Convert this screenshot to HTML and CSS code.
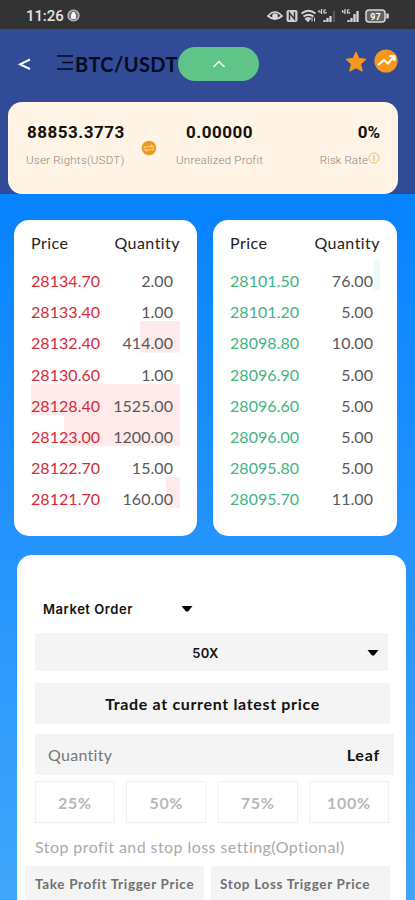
FILE: index.html
```html
<!DOCTYPE html>
<html lang="en">
<head>
<meta charset="utf-8">
<title>BTC/USDT</title>
<link rel="stylesheet" href="styles.css">
</head>
<body>
<div class="status">
  <span class="time">11:26</span>
  <svg class="lock" width="13" height="13" viewBox="0 0 13 13"><circle cx="6.5" cy="6.5" r="5.5" fill="#77787a" stroke="#c9c9c9" stroke-width="1.2"/><path d="M4.500 6h4v3.500h-4zM5 6V4.800a1.500 1.500 0 0 1 3 0V6" fill="#fff" stroke="#fff" stroke-width=".8"/></svg>
  <svg class="sys" width="124" height="16" viewBox="0 0 124 16" fill="none" stroke="#d8d8d8">
    <path d="M1 8Q8 0 15 8Q8 14 1 8Z" stroke-width="1.7"/><circle cx="8" cy="8" r="2.8" fill="#d8d8d8" stroke="none"/>
    <rect x="19.500" y="2" width="11" height="12" rx="2" fill="#d0d0d0" stroke="none"/><path d="M22.500 12V5l5 6V4" stroke="#333" stroke-width="1.4"/>
    <path d="M34.500 5.500Q41.500 0 48.500 5.500M36.500 8.500Q41.500 5 46.500 8.500M39 11Q41 9 43 10.500L41 13Z" stroke-width="1.8"/><path d="M45 9.500v4M47.500 9.500v4"/>
    <path d="M52 2v2h2M54.500 1v5M59 2h-2v3h2V4M75.500 2v2h2M78 1v5M82.500 2h-2v3h2V4" stroke-width="1.200"/>
    <path d="M57.500 14v-2M60.500 14v-4M63.500 14V8M81.500 14v-2M84.500 14v-4M87.500 14V6M90.500 14V3" stroke-width="2.300"/><path d="M67 14V3" stroke="#5a5a5a" stroke-width="2"/>
    <rect x="99" y="2" width="19" height="12" rx="3" fill="#626262" stroke-width="1.5"/><path d="M120.500 5.500v5" stroke-width="2.500"/>
    <text x="108.500" y="11.500" class="battery">97</text>
  </svg>
</div>
<header class="header">
  <div class="nav">
    <svg class="back" width="13" height="13" viewBox="0 0 13 13"><path d="M12 1.500 2 6.300l10 4.700" fill="none" stroke="#fff" stroke-width="2"/></svg>
    <svg class="menu" width="18" height="17" viewBox="0 0 18 17"><path d="M1 2h16M6 8.500h11M1 15h16" stroke="#06091c" stroke-width="1.300"/></svg>
    <span class="pair">BTC/USDT</span>
    <span class="pill"><svg width="14" height="8" viewBox="0 0 14 8"><path d="M1.500 7 7 1.500 12.500 7" fill="none" stroke="#effaf1" stroke-width="1.500"/></svg></span>
    <svg class="star" width="22" height="22" viewBox="0 0 22 22"><path d="m11 1 2.900 6.500 7.100.7-5.300 4.800 1.500 7.200L11 16.700 4.800 20.200 6.300 13 1 8.200l7.100-.7Z" fill="#f7981d" stroke="#f7981d" stroke-linejoin="round"/></svg>
    <svg class="trend" width="24" height="24" viewBox="0 0 24 24"><circle cx="12" cy="12" r="11.600" fill="#f7981d"/><path d="m4 16 6-5 4 3.500 6-7M15.500 7H20.500v5" fill="none" stroke="#fff" stroke-width="2"/></svg>
  </div>
  <section class="summary">
    <div class="stat rights"><b>88853.3773</b><span>User Rights(USDT)</span></div>
    <svg class="swap" width="16" height="16" viewBox="0 0 16 16"><circle cx="8" cy="8" r="7.300" fill="#ed9a1d"/><path d="M3 8.500V7l7-1V4.500L13 7H6M13 8v1.500l-7 .8v1.500L3 9.500h7" fill="#fbd78f" stroke="#fbd78f" stroke-width=".5"/></svg>
    <div class="stat profit"><b>0.00000</b><span>Unrealized Profit</span></div>
    <div class="stat risk"><b>0%</b><span>Risk Rate<svg width="12" height="12" viewBox="0 0 12 12"><circle cx="6" cy="6" r="5" fill="none" stroke="#e8c379"/><path d="M6 3v6" stroke="#e8c379" stroke-width="1.300"/></svg></span></div>
  </section>
</header>
<main>
  <div class="books">
    <section class="book sell">
      <div class="row head"><span>Price</span><span>Quantity</span></div>
      <div class="row" style="--d:0px"><i>28134.70</i><em>2.00</em></div>
      <div class="row" style="--d:0px"><i>28133.40</i><em>1.00</em></div>
      <div class="row" style="--d:40px"><i>28132.40</i><em>414.00</em></div>
      <div class="row" style="--d:0px"><i>28130.60</i><em>1.00</em></div>
      <div class="row" style="--d:149px"><i>28128.40</i><em>1525.00</em></div>
      <div class="row" style="--d:116px"><i>28123.00</i><em>1200.00</em></div>
      <div class="row" style="--d:0px"><i>28122.70</i><em>15.00</em></div>
      <div class="row" style="--d:14px"><i>28121.70</i><em>160.00</em></div>
    </section>
    <section class="book buy">
      <div class="row head"><span>Price</span><span>Quantity</span></div>
      <div class="row" style="--d:6px"><i>28101.50</i><em>76.00</em></div>
      <div class="row" style="--d:0px"><i>28101.20</i><em>5.00</em></div>
      <div class="row" style="--d:0px"><i>28098.80</i><em>10.00</em></div>
      <div class="row" style="--d:0px"><i>28096.90</i><em>5.00</em></div>
      <div class="row" style="--d:0px"><i>28096.60</i><em>5.00</em></div>
      <div class="row" style="--d:0px"><i>28096.00</i><em>5.00</em></div>
      <div class="row" style="--d:0px"><i>28095.80</i><em>5.00</em></div>
      <div class="row" style="--d:0px"><i>28095.70</i><em>11.00</em></div>
    </section>
  </div>
  <section class="order">
    <div class="type"><span>Market Order</span><svg width="12" height="6" viewBox="0 0 12 6"><path d="M.5 0h11L7 5.500H5Z"/></svg></div>
    <div class="field leverage"><span>50X</span><svg width="12" height="6" viewBox="0 0 12 6"><path d="M.5 0h11L7 5.500H5Z"/></svg></div>
    <div class="field latest">Trade at current latest price</div>
    <div class="field quantity"><span>Quantity</span><b>Leaf</b></div>
    <div class="percents"><span>25%</span><span>50%</span><span>75%</span><span>100%</span></div>
    <p class="optional">Stop profit and stop loss setting(Optional)</p>
    <div class="triggers"><span class="take">Take Profit Trigger Price</span><span class="stop">Stop Loss Trigger Price</span></div>
  </section>
</main>
</body>
</html>
```

FILE: styles.css
```css
* { box-sizing: border-box; }
html, body { height: 900px; overflow: hidden; }
body {
  margin: 0;
  font-family: Lato, "Open Sans", sans-serif;
  color: #111;
  background: linear-gradient(#0783ff 194px, #2493fd 540px, #40a6fb 900px);
}
svg { display: block; flex: none; }

.status { display: flex; align-items: center; height: 29px; padding: 2px 24px 0 26px; background: #333; }
.time { font: 500 15px/20px Roboto, sans-serif; letter-spacing: -.1px; color: #e4e4e4; width: 41px; }
.sys { margin-left: auto; }
.battery { font: 700 9px Roboto, sans-serif; fill: #fff; stroke: none; text-anchor: middle; }

.header { height: 165px; padding-left: 8px; background: #314b96; }
.nav { display: flex; align-items: center; height: 73px; padding: 0 17px 4px 10px; }
.back { margin: 2px 25px 0 0; }
.menu { margin-top: -2px; }
.pair { width: 104px; padding-left: 1px; font-size: 20px; font-weight: 700; line-height: 24px; letter-spacing: .4px; white-space: nowrap; color: #070b1f; }
.pill { display: flex; align-items: center; justify-content: center; width: 81px; height: 34px; border-radius: 17px; background: #60c488; }
.star { margin: -4px 7px 0 auto; }
.trend { margin-top: -6px; }

.summary { display: flex; width: 390px; height: 92px; padding: 19px 18px 0; border-radius: 14px; background: #fff4e6; }
.stat b { display: block; font: 700 17px/22px Roboto, sans-serif; letter-spacing: .5px; white-space: nowrap; }
.stat span { display: flex; margin-top: 9px; font: 300 11.500px/16px Roboto, sans-serif; color: #8f8983; white-space: nowrap; letter-spacing: .25px; }
.rights { width: 115px; padding-left: 1px; }
.rights span { margin-left: -1px; }
.swap { margin-top: 19px; }
.profit { width: 90px; margin-left: 19px; }
.profit b { padding-left: 10px; }
.risk { margin-left: auto; text-align: right; }
.risk b { letter-spacing: 0; }
.risk span { letter-spacing: .1px; }

.books { display: flex; gap: 16px; padding: 26px 18px 0 14px; }
.book { height: 316px; padding: 8px 17px 0; border-radius: 15px; background: #fff; }
.row { display: flex; justify-content: space-between; height: 31.150px; padding: 12px 7px 0 0; font-size: 16px; line-height: 20px; letter-spacing: .05px; background: linear-gradient(var(--tint), var(--tint)) right / var(--d, 0) 100% no-repeat; }
.row i, .row em { font-style: normal; }
.row em { color: #595959; }
.row.head { padding: 5px 0 0; letter-spacing: .45px; color: #222; background: none; }
.sell { --tint: #feeaea; width: 183px; }
.sell i { color: #d52b36; }
.buy { --tint: #eefaf5; width: 184px; }
.buy i { color: #43b382; }

.order { width: 389px; height: 370px; margin: 19px 0 0 17px; padding: 42px 12px 0 18px; border-radius: 15px; background: #fff; overflow: hidden; }
.type { display: flex; align-items: center; height: 24px; width: 158px; padding-left: 8px; justify-content: space-between; font: 600 13px/20px Inter, sans-serif; letter-spacing: .55px; }
.field { display: flex; align-items: center; background: #f4f4f4; }
.leverage { position: relative; width: 353px; height: 38px; margin-top: 12px; justify-content: center; font: 600 13px/20px Inter, sans-serif; letter-spacing: .3px; padding: 2px 12px 0 0; }
.leverage svg { position: absolute; right: 9px; top: 17px; }
.latest { width: 355px; height: 41px; margin-top: 12px; justify-content: center; font-size: 16px; font-weight: 700; letter-spacing: .66px; }
.quantity { width: 359px; height: 41px; margin-top: 10px; padding: 0 14px 0 13px; justify-content: space-between; font-size: 16px; letter-spacing: .3px; color: #777; }
.quantity b { color: #111; letter-spacing: .8px; }
.percents { display: grid; grid-template-columns: repeat(4, 80px); gap: 11.300px; margin-top: 6px; }
.percents span { height: 42px; border: 1px solid #f0f0f0; text-align: center; font-size: 16px; line-height: 41px; letter-spacing: .7px; font-weight: 700; color: #b8b8b8; }
.optional { margin: 13px 0 0; font-size: 16px; line-height: 22px; letter-spacing: .43px; color: #aaa; white-space: nowrap; }
.triggers { display: flex; gap: 7px; margin: 8px 0 0 -10px; }
.triggers span { width: 179px; height: 40px; padding-left: 10px; background: #f4f4f4; font-size: 13.500px; font-weight: 700; line-height: 36px; letter-spacing: .67px; color: #707070; white-space: nowrap; }
.triggers .stop { padding-left: 9px; }
```
